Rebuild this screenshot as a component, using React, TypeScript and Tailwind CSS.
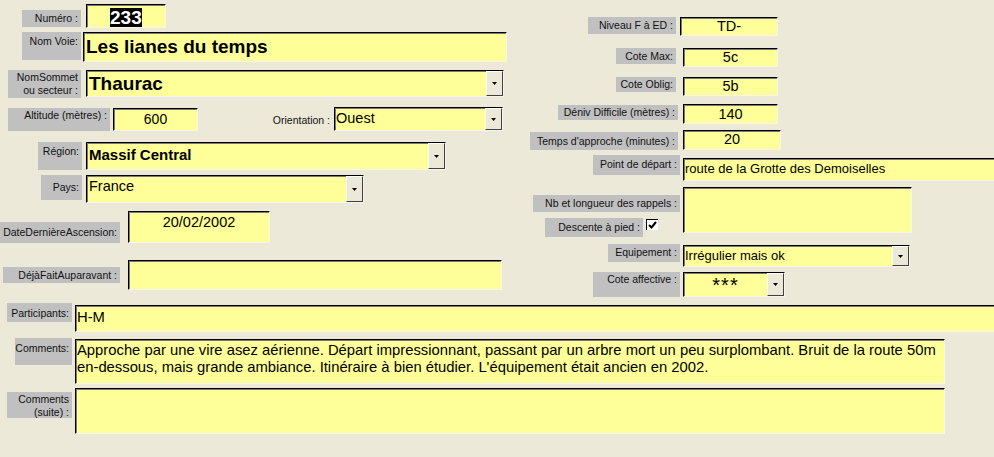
import React from "react";

const font = { fontFamily: '"Liberation Sans", Arial, sans-serif' };

function Label({ cls, children }: { cls: string; children: React.ReactNode }) {
  return (
    <div className={`shrink-0 bg-[#c0c0c0] text-right pr-[3px] text-[10.5px] leading-[13px] text-[#111] whitespace-nowrap ${cls}`}>
      {children}
    </div>
  );
}

function DropBtn() {
  return (
    <div className="w-[17px] shrink-0 self-stretch bg-[#ece9d8] border-t border-l border-t-white border-l-white border-b border-r border-b-[#404040] border-r-[#404040] flex items-center justify-center">
      <svg width="5" height="3" viewBox="0 0 5 3">
        <path d="M0 0h5L2.5 3z" fill="#000" />
      </svg>
    </div>
  );
}

function Field({
  cls,
  textCls = "",
  dd = false,
  children,
}: {
  cls: string;
  textCls?: string;
  dd?: boolean;
  children?: React.ReactNode;
}) {
  return (
    <div
      className={`shrink-0 flex bg-[#ffff99] border-t border-l border-t-black border-l-black border-b border-r border-b-[#f6f5ee] border-r-[#f6f5ee] shadow-[inset_1px_1px_0_#7a7a7a] overflow-hidden ${cls}`}
    >
      <div className={`flex-1 min-w-0 text-black ${textCls}`}>{children}</div>
      {dd && <DropBtn />}
    </div>
  );
}

export default function App() {
  return (
    <div className="w-[994px] h-[457px] bg-[#ece9d8] overflow-hidden" style={font}>
      <div className="flex items-start">
        {/* Left column */}
        <div className="w-[530px] shrink-0 flex flex-col">
          <div className="flex items-start mt-[4px]">
            <Label cls="ml-[22px] w-[59px] h-[17px] mt-[6px] pt-[2px]">Numéro :</Label>
            <Field cls="ml-[5px] w-[80px] h-[24px]" textCls="pl-[23px] pt-[2px]">
              <span className="bg-black text-white font-bold text-[19px] leading-[19px] inline-block">233</span>
            </Field>
          </div>
          <div className="flex items-start mt-[4px]">
            <Label cls="ml-[22px] w-[59px] h-[28px] pt-[3px]">Nom Voie:</Label>
            <Field cls="ml-[2px] w-[424px] h-[30px]" textCls="pl-[2px] pt-[3px] font-bold text-[19px] leading-[22px] whitespace-nowrap">
              Les lianes du temps
            </Field>
          </div>
          <div className="flex items-start mt-[8px]">
            <Label cls="ml-[8px] w-[73px] h-[28px] pt-[1px] leading-[12px]">
              NomSommet
              <br />
              ou secteur :
            </Label>
            <Field cls="ml-[5px] w-[418px] h-[27px]" textCls="pl-[2px] pt-[2px] font-bold text-[19px] leading-[22px] whitespace-nowrap" dd>
              Thaurac
            </Field>
          </div>
          <div className="flex items-start mt-[9px]">
            <Label cls="ml-[8px] w-[102px] h-[23px] mt-[1px] pt-[1px]">Altitude (mètres) :</Label>
            <Field cls="ml-[3px] w-[85px] h-[23px] mt-[1px]" textCls="text-center text-[14px] leading-[17px] pt-[2px]">
              600
            </Field>
            <div className="ml-[70px] w-[66px] text-right pr-[4px] text-[10.5px] leading-[13px] pt-[7px] text-[#111] whitespace-nowrap">
              Orientation :
            </div>
            <Field cls="ml-[0px] w-[169px] h-[24px]" textCls="pl-[1px] pt-[2px] text-[14.5px] leading-[17px]" dd>
              Ouest
            </Field>
          </div>
          <div className="flex items-start mt-[11px]">
            <Label cls="ml-[38px] w-[44px] h-[28px] pt-[3px]">Région:</Label>
            <Field cls="ml-[4px] w-[360px] h-[28px]" textCls="pl-[2px] pt-[3px] font-bold text-[15px] leading-[17px] whitespace-nowrap" dd>
              Massif Central
            </Field>
          </div>
          <div className="flex items-start mt-[5px]">
            <Label cls="ml-[41px] w-[41px] h-[25px] pt-[6px]">Pays:</Label>
            <Field cls="ml-[4px] w-[278px] h-[28px]" textCls="pl-[2px] pt-[2px] text-[14.5px] leading-[17px]" dd>
              France
            </Field>
          </div>
          <div className="flex items-start mt-[8px]">
            <Label cls="ml-[0px] w-[120px] h-[21px] mt-[11px] pt-[4px]">DateDernièreAscension:</Label>
            <Field cls="ml-[8px] w-[142px] h-[32px]" textCls="text-center pt-[2px] text-[14.5px] leading-[17px]">
              20/02/2002
            </Field>
          </div>
          <div className="flex items-start mt-[17px]">
            <Label cls="ml-[3px] w-[117px] h-[16px] mt-[7px] pt-[2px]">DéjàFaitAuparavant :</Label>
            <Field cls="ml-[8px] w-[374px] h-[30px]" />
          </div>
        </div>

        {/* Right column */}
        <div className="flex-1 flex flex-col">
          <div className="flex items-start mt-[17px]">
            <Label cls="ml-[58px] w-[88px] h-[17px] pt-[2px]">Niveau F à ED :</Label>
            <Field cls="ml-[4px] w-[98px] h-[19px]" textCls="text-center text-[14.5px] leading-[17px]">
              TD-
            </Field>
          </div>
          <div className="flex items-start mt-[12px]">
            <Label cls="ml-[86px] w-[60px] h-[16px] pt-[2px]">Cote Max:</Label>
            <Field cls="ml-[7px] w-[95px] h-[19px]" textCls="text-center text-[14.5px] leading-[17px]">
              5c
            </Field>
          </div>
          <div className="flex items-start mt-[10px]">
            <Label cls="ml-[86px] w-[60px] h-[15px] pt-[1px]">Cote Oblig:</Label>
            <Field cls="ml-[7px] w-[95px] h-[19px]" textCls="text-center text-[14.5px] leading-[17px]">
              5b
            </Field>
          </div>
          <div className="flex items-start mt-[8px]">
            <Label cls="ml-[28px] w-[120px] h-[15px] mt-[1px] pt-[1px]">Déniv Difficile (mètres) :</Label>
            <Field cls="ml-[5px] w-[95px] h-[20px]" textCls="text-center text-[14.5px] leading-[17px] pt-[1px]">
              140
            </Field>
          </div>
          <div className="flex items-start mt-[6px]">
            <Label cls="ml-[0px] w-[148px] h-[18px] mt-[2px] pt-[3px]">Temps d'approche (minutes) :</Label>
            <Field cls="ml-[5px] w-[98px] h-[20px]" textCls="text-center text-[14.5px] leading-[17px]">
              20
            </Field>
          </div>
          <div className="flex items-start mt-[5px]">
            <Label cls="ml-[63px] w-[87px] h-[20px] pt-[3px]">Point de départ :</Label>
            <Field cls="ml-[3px] w-[330px] h-[23px] mt-[3px]" textCls="pl-[1px] pt-[1px] text-[13px] leading-[17px] whitespace-nowrap">
              route de la Grotte des Demoiselles
            </Field>
          </div>
          <div className="flex items-start mt-[6px]">
            <div className="w-[150px] shrink-0 flex flex-col">
              <Label cls="ml-[3px] w-[147px] h-[17px] mt-[8px] pt-[2px]">Nb et longueur des rappels :</Label>
              <div className="flex items-start mt-[6px]">
                <Label cls="ml-[15px] w-[98px] h-[19px] pt-[3px]">Descente à pied :</Label>
                <div className="ml-[3px] mt-[1px] w-[12px] h-[11px] bg-white border-t border-l border-black border-b-0 border-r-0 flex items-center justify-center">
                  <svg width="9" height="8" viewBox="0 0 9 8">
                    <path d="M1 4l2.5 2.5L8 1" stroke="#000" strokeWidth="2" fill="none" />
                  </svg>
                </div>
              </div>
            </div>
            <Field cls="ml-[3px] w-[229px] h-[46px]" />
          </div>
          <div className="flex items-start mt-[7px]">
            <Label cls="ml-[78px] w-[72px] h-[18px] pt-[2px]">Equipement :</Label>
            <Field cls="ml-[3px] w-[227px] h-[22px] mt-[1px]" textCls="pl-[1px] pt-[1px] text-[13px] leading-[17px] whitespace-nowrap" dd>
              Irrégulier mais ok
            </Field>
          </div>
          <div className="flex items-start mt-[5px]">
            <Label cls="ml-[63px] w-[87px] h-[25px] pt-[1px]">Cote affective :</Label>
            <Field cls="ml-[3px] w-[102px] h-[25px]" textCls="text-center text-[20px] leading-[20px] pt-[2px] tracking-[1px]" dd>
              ***
            </Field>
          </div>
        </div>
      </div>

      {/* Bottom section */}
      <div className="flex items-start mt-[6px]">
        <Label cls="ml-[7px] w-[65px] h-[19px] pt-[4px]">Participants:</Label>
        <Field cls="ml-[3px] w-[930px] h-[27px] mt-[2px]" textCls="pl-[1px] pt-[3px] text-[14.8px] leading-[17px]">
          H-M
        </Field>
      </div>
      <div className="flex items-start mt-[6px]">
        <Label cls="ml-[15px] w-[57px] h-[27px] pt-[4px]">Comments:</Label>
        <Field cls="ml-[3px] w-[870px] h-[45px] mt-[1px]" textCls="pl-[1px] pt-[2px] text-[14.8px] leading-[17px]">
          Approche par une vire asez aérienne. Départ impressionnant, passant par un arbre mort un peu surplombant. Bruit de la route 50m en-dessous, mais grande ambiance. Itinéraire à bien étudier. L'équipement était ancien en 2002.
        </Field>
      </div>
      <div className="flex items-start mt-[4px]">
        <Label cls="ml-[7px] w-[65px] h-[26px] mt-[4px] pt-[1px] leading-[12px]">
          Comments
          <br />
          (suite) :
        </Label>
        <Field cls="ml-[3px] w-[870px] h-[46px]" />
      </div>
    </div>
  );
}
